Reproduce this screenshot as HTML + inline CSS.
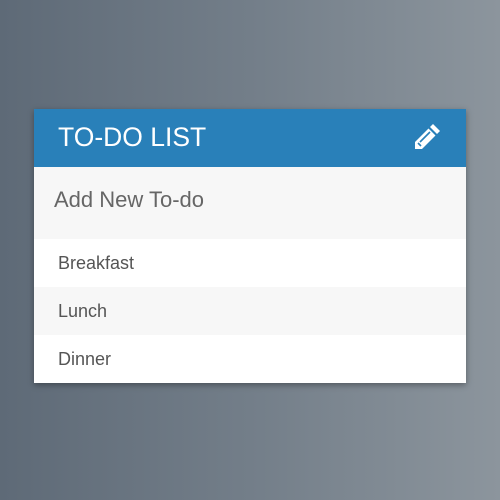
<!DOCTYPE html>
<html><head><style>
body{margin:0;width:500px;height:500px;overflow:hidden;background:linear-gradient(to right,#5e6a77 0%,#737e89 50%,#8c959d 100%);font-family:"Liberation Sans",sans-serif;}
.card{position:absolute;left:34px;top:109px;width:432px;box-shadow:0 2px 6px rgba(0,0,0,.35);}
.h{height:58px;background:#2980b9;color:#fff;font-size:26.5px;line-height:56px;padding-left:24px;position:relative;}
.h svg{position:absolute;right:24px;top:13px;}
.in{height:72px;background:#f7f7f7;color:#666;font-size:22px;line-height:66px;padding-left:20px;}
.r{height:48px;line-height:48px;font-size:18px;color:#555;padding-left:24px;background:#fff;}
.r.g{background:#f7f7f7;}
</style></head><body>
<div class="card">
<div class="h">TO-DO LIST
<svg width="30" height="30" viewBox="0 0 30 30"><g fill="#fff"><path d="M21 2l7 7-3 3-7-7z"/><path d="M16.5 6.5l7 7L10 27H3v-7z"/></g><path d="M6 21l3 3M18 10l-10 10" stroke="#2980b9" stroke-width="1.6"/></svg>
</div>
<div class="in">Add New To-do</div>
<div class="r">Breakfast</div>
<div class="r g">Lunch</div>
<div class="r">Dinner</div>
</div>
</body></html>
